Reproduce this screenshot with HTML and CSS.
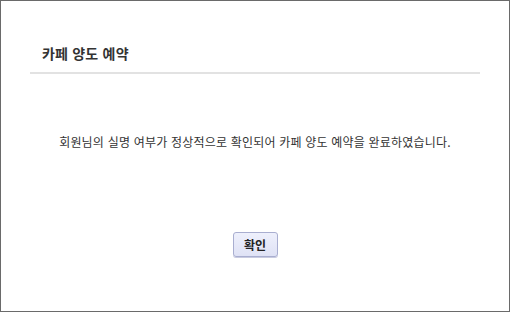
FILE: index.html
```html
<!DOCTYPE html>
<html lang="ko">
<head>
<meta charset="utf-8">
<link rel="stylesheet" href="styles.css">
</head>
<body>
<div class="popup">
  <div class="header">
    <h1 class="title">카페 양도 예약</h1>
  </div>
  <p class="message">회원님의 실명 여부가 정상적으로 확인되어 카페 양도 예약을 완료하였습니다.</p>
  <div class="actions">
    <button class="btn" type="button">확인</button>
  </div>
</div>
</body>
</html>
```
FILE: styles.css
```css
html, body {
  margin: 0;
  padding: 0;
  background: #fff;
}
.popup {
  box-sizing: border-box;
  width: 510px;
  height: 312px;
  border: 1px solid #6a6a6a;
  padding: 0 29px;
  font-family: "Noto Sans CJK KR", "Liberation Sans", sans-serif;
  color: #333;
}
.header {
  padding: 42px 0 0 12px;
  border-bottom: 2px solid #e2e2e2;
  height: 29px;
}
.title {
  margin: 0;
  font-size: 14px;
  line-height: 20px;
  font-weight: bold;
  color: #333;
  letter-spacing: 0.2px;
}
.message {
  margin: 59px 0 0;
  text-align: center;
  font-size: 12px;
  line-height: 18px;
  color: #333;
  letter-spacing: 0.2px;
}
.actions {
  margin-top: 81px;
  display: flex;
  justify-content: center;
}
.btn {
  width: 45px;
  height: 25px;
  padding: 0;
  border: 1px solid #a9aed0;
  border-radius: 3px;
  background: linear-gradient(#eef0fc, #dfe2f5);
  font-family: "Noto Sans CJK KR", "Liberation Sans", sans-serif;
  font-size: 12px;
  font-weight: bold;
  color: #222;
  box-shadow: 0 1px 0 #c8cbe0;
}
```
